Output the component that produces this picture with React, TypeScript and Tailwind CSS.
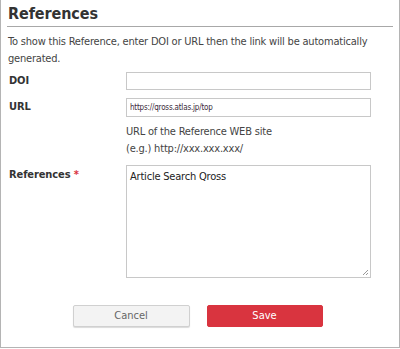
import React from "react";

export default function App() {
  return (
    <div
      className="w-[400px] h-[348px] border border-t-0 border-[#b4b4b4] bg-white text-[#333] relative"
      style={{ fontFamily: "Tahoma, 'DejaVu Sans Condensed', 'DejaVu Sans', sans-serif" }}
    >
      <div className="mx-[6px] pt-[2px] border-b border-[#a8a8a8] h-[27px]">
        <h1 className="text-[16px] font-bold leading-[24px] tracking-[-0.1px] text-[#333] pl-[1px]">References</h1>
      </div>
      <p className="px-[7px] pt-[6px] text-[11px] leading-[17px] tracking-[-0.2px] text-[#444]">
        To show this Reference, enter DOI or URL then the link will be automatically generated.
      </p>
      <div className="flex mt-[5px] items-center h-[18px]">
        <label className="w-[125px] pl-[8px] text-[11px] font-bold tracking-[-0.1px] text-[#333]">DOI</label>
        <div className="w-[245px] h-[18px] border border-[#c8c8c8] bg-white" />
      </div>
      <div className="flex mt-[8px] items-center h-[19px]">
        <label className="w-[125px] pl-[8px] text-[11px] font-bold tracking-[-0.1px] text-[#333]">URL</label>
        <div className="w-[245px] h-[19px] border border-[#c8c8c8] bg-white flex items-center pl-[3px] text-[8px] tracking-[-0.2px] text-[#3a2a3a]">
          https://qross.atlas.jp/top
        </div>
      </div>
      <div className="pl-[125px] pt-[6px] text-[11px] leading-[17px] tracking-[-0.2px] text-[#444]">
        <div>URL of the Reference WEB site</div>
        <div>(e.g.) http://xxx.xxx.xxx/</div>
      </div>
      <div className="flex mt-[8px]">
        <label className="w-[125px] pl-[8px] pt-[2px] text-[11px] font-bold tracking-[-0.1px] text-[#333]">
          References <span className="text-[#d9343f]">*</span>
        </label>
        <div className="w-[245px] h-[113px] border border-[#c8c8c8] bg-white relative px-[3px] pt-[2px] text-[11px] leading-[17px] tracking-[-0.2px] text-[#222]">
          Article Search Qross
          <svg className="absolute right-[1px] bottom-[1px]" width="7" height="7" viewBox="0 0 7 7">
            <line x1="6" y1="1" x2="1" y2="6" stroke="#999" strokeWidth="1" />
            <line x1="6" y1="4" x2="4" y2="6" stroke="#999" strokeWidth="1" />
          </svg>
        </div>
      </div>
      <div className="flex justify-center gap-[17px] mt-[27px] pr-[5px]">
        <button className="w-[117px] h-[22px] bg-[#f3f3f3] border border-[#d0d0d0] rounded-[2px] shadow-[0_1px_1px_rgba(0,0,0,0.15)] text-[11px] text-[#666]">
          Cancel
        </button>
        <button className="w-[116px] h-[22px] bg-[#d9343f] border border-[#d9343f] rounded-[2px] text-[11px] text-white">
          Save
        </button>
      </div>
    </div>
  );
}
